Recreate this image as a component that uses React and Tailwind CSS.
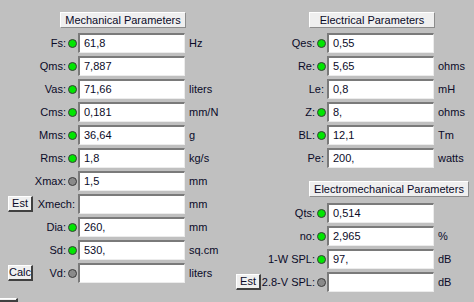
import React from 'react';

const font = { fontFamily: '"Liberation Sans", Arial, sans-serif' };

const Led = ({ on }) => (
    <div
        className={`w-[9px] h-[9px] rounded-full border border-[#3a3a3a] ml-[2px] mr-[1px] shrink-0 ${
            on ? 'bg-[#00e600]' : 'bg-[#8a8a8a]'
        }`}
    />
);

const SmallButton = ({ children }) => (
    <button className="h-[16px] w-[25px] bg-[#f0f0f0] border-t border-l border-t-white border-l-white border-b-2 border-r-2 border-b-[#404040] border-r-[#404040] text-[11px] leading-none text-[#0a0a28] flex items-center justify-center shrink-0">
        {children}
    </button>
);

const Header = ({ children, width, ml }) => (
    <div
        className={`h-[16px] ${width} ${ml} bg-[#efefef] border-t border-l border-t-white border-l-white border-b border-r border-b-[#8c8c8c] border-r-[#8c8c8c] text-[11px] leading-none text-[#0a0a28] flex items-center justify-center`}
    >
        {children}
    </div>
);

const Row = ({ label, value, unit, led, button, lead, btnMl }) => (
    <div className="flex items-center h-[20px]">
        <div className={`${lead} flex items-center h-full`}>
            {button && <div className={btnMl}><SmallButton>{button}</SmallButton></div>}
            <div className="flex-1 flex items-center justify-end">
                <span className={`text-[11px] text-[#0a0a28] whitespace-nowrap ${led === undefined ? 'mr-[3px]' : ''}`}>{label}</span>
                {led !== undefined && <Led on={led} />}
            </div>
        </div>
        <div className="w-[107px] h-[20px] bg-white border-t-2 border-l-2 border-t-[#7a7a7a] border-l-[#7a7a7a] border-b border-r border-b-[#ececec] border-r-[#ececec] pl-[4px] flex items-center text-[11px] text-[#0a0a28]">
            {value}
        </div>
        <span className="ml-[4px] text-[11px] text-[#0a0a28] whitespace-nowrap">{unit}</span>
    </div>
);

const mech = [
    { label: 'Fs:', value: '61,8', unit: 'Hz', led: true },
    { label: 'Qms:', value: '7,887', unit: '', led: true },
    { label: 'Vas:', value: '71,66', unit: 'liters', led: true },
    { label: 'Cms:', value: '0,181', unit: 'mm/N', led: true },
    { label: 'Mms:', value: '36,64', unit: 'g', led: true },
    { label: 'Rms:', value: '1,8', unit: 'kg/s', led: true },
    { label: 'Xmax:', value: '1,5', unit: 'mm', led: false },
    { label: 'Xmech:', value: '', unit: 'mm', button: 'Est' },
    { label: 'Dia:', value: '260,', unit: 'mm', led: true },
    { label: 'Sd:', value: '530,', unit: 'sq.cm', led: true },
    { label: 'Vd:', value: '', unit: 'liters', led: false, button: 'Calc' },
];

const elec = [
    { label: 'Qes:', value: '0,55', unit: '', led: true },
    { label: 'Re:', value: '5,65', unit: 'ohms', led: true },
    { label: 'Le:', value: '0,8', unit: 'mH' },
    { label: 'Z:', value: '8,', unit: 'ohms', led: true },
    { label: 'BL:', value: '12,1', unit: 'Tm', led: true },
    { label: 'Pe:', value: '200,', unit: 'watts' },
];

const emech = [
    { label: 'Qts:', value: '0,514', unit: '', led: true },
    { label: 'no:', value: '2,965', unit: '%', led: true },
    { label: '1-W SPL:', value: '97,', unit: 'dB', led: true },
    { label: '2.8-V SPL:', value: '', unit: 'dB', led: false, button: 'Est' },
];

export default function App() {
    return (
        <div className="w-[474px] h-[302px] bg-[#c0c0c0] overflow-hidden flex" style={font}>
            {/* Mechanical */}
            <div className="w-[236px] shrink-0 flex flex-col">
                <div className="mt-[12px]">
                    <Header width="w-[126px]" ml="ml-[60px]">Mechanical Parameters</Header>
                </div>
                <div className="mt-[5px] flex flex-col gap-[3px]">
                    {mech.map((r) => (
                        <Row key={r.label} {...r} lead="w-[78px]" btnMl="ml-[8px]" />
                    ))}
                </div>
                {/* partly visible button below the fold */}
                <div className="mt-[15px] -ml-[8px] h-[16px] w-[26px] bg-[#f0f0f0] border-t border-l border-t-white border-l-white border-b-2 border-r-2 border-b-[#404040] border-r-[#404040]" />
            </div>

            {/* Electrical */}
            <div className="flex-1 flex flex-col">
                <div className="mt-[12px]">
                    <Header width="w-[126px]" ml="ml-[73px]">Electrical Parameters</Header>
                </div>
                <div className="mt-[5px] flex flex-col gap-[3px]">
                    {elec.map((r) => (
                        <Row key={r.label} {...r} lead="w-[91px]" btnMl="" />
                    ))}
                </div>
                <div className="mt-[13px]">
                    <Header width="w-[160px]" ml="ml-[73px]">Electromechanical Parameters</Header>
                </div>
                <div className="mt-[6px] flex flex-col gap-[3px]">
                    {emech.map((r) => (
                        <Row key={r.label} {...r} lead="w-[91px]" btnMl="" />
                    ))}
                </div>
            </div>
        </div>
    );
}
